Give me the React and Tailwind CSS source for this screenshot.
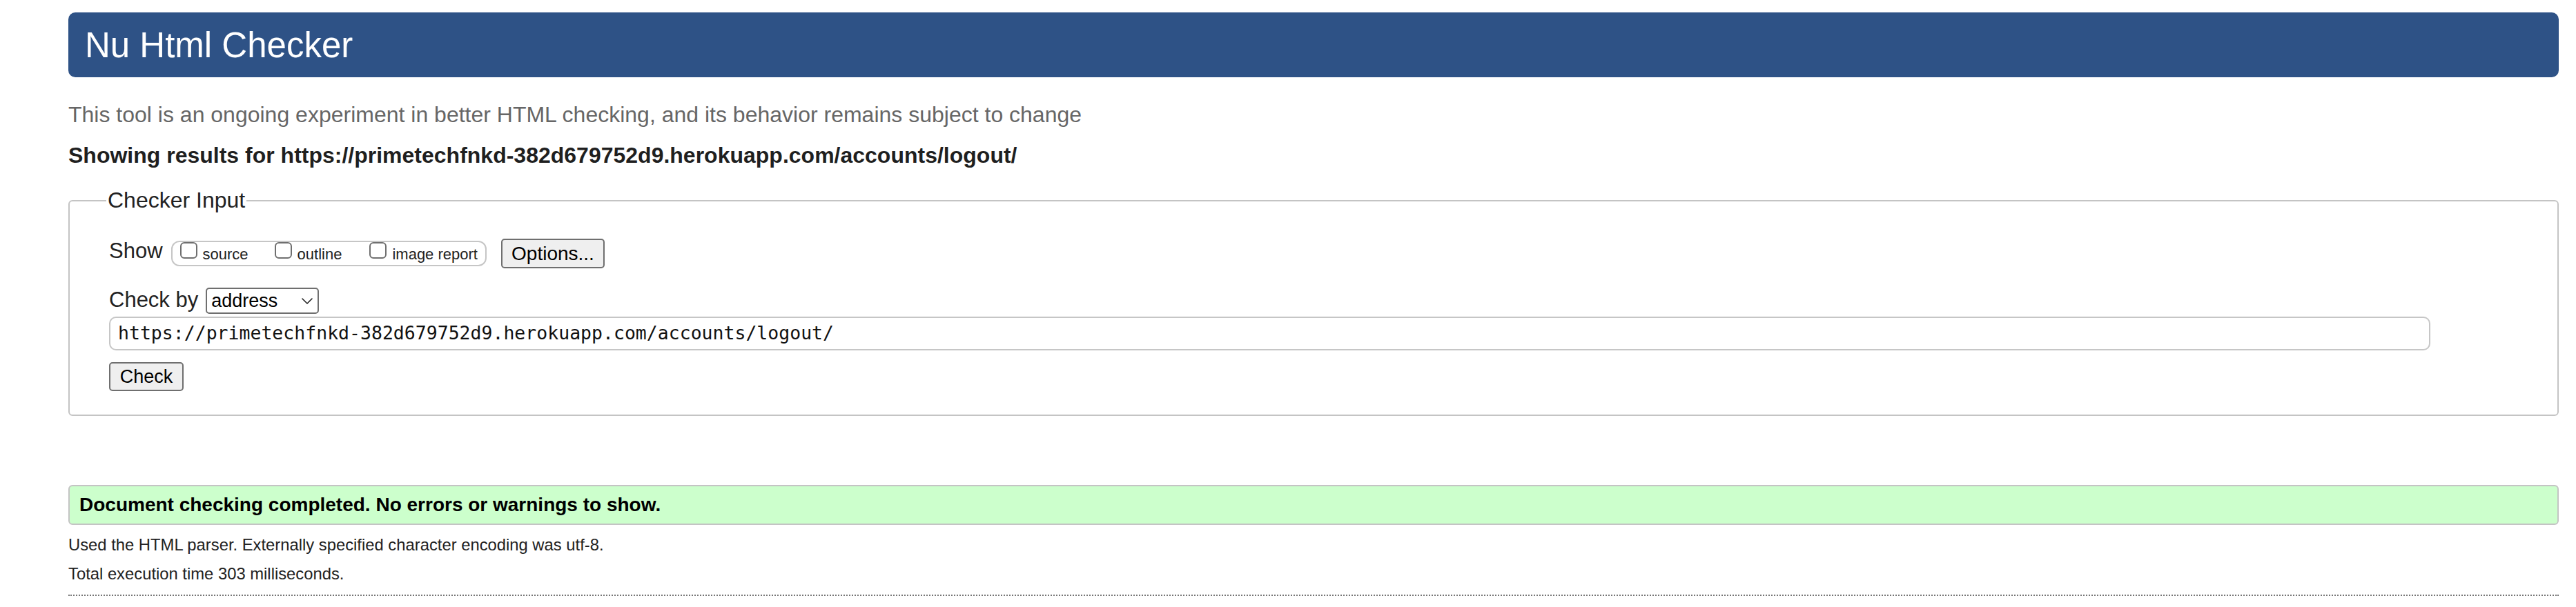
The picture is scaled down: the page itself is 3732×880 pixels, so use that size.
import React from 'react';

const sans = { fontFamily: '"Liberation Sans", Arial, sans-serif' };

const url = 'https://primetechfnkd-382d679752d9.herokuapp.com/accounts/logout/';

const CheckOption = ({ label, className = '' }) => (
  <label className={`flex items-start ${className}`}>
    <input
      type="checkbox"
      className="appearance-none w-[25px] h-[24px] border-2 border-[#6f6f6f] rounded-[6px] bg-white shrink-0"
    />
    <span className="ml-[8px] mt-[5px] text-[22px] leading-[25px] text-[#222]">{label}</span>
  </label>
);

const Button = ({ children, className = '' }) => (
  <button
    className={`flex items-center justify-center bg-[#efefef] border-2 border-[#6f6f6f] rounded-[5px] leading-none text-black ${className}`}
  >
    {children}
  </button>
);

export default function App() {
  return (
    <div className="bg-white min-h-[880px] pt-[18px]" style={sans}>
      <div className="ml-[99px] w-[3608px]">
        {/* Title bar */}
        <div className="h-[94px] bg-[#2e5286] rounded-[10px] flex items-center pl-[24px]">
          <h1 className="text-[51px] leading-none font-normal text-white">Nu Html Checker</h1>
        </div>

        <p className="mt-[36px] text-[32px] leading-[37px] text-[#666]">
          This tool is an ongoing experiment in better HTML checking, and its behavior remains subject to change
        </p>

        <p className="mt-[22px] text-[32px] leading-[37px] font-bold text-[#1f1f1f]">
          Showing results for {url}
        </p>

        {/* Checker input */}
        <fieldset className="mt-[28px] border-2 border-solid border-[#c4c4c4] rounded-[6px] pl-[57px] pt-[37px] pb-[34px]">
          <legend className="-ml-[4px] px-[2px] text-[32px] leading-[37px] text-[#222]">Checker Input</legend>

          <div className="flex items-start">
            <span className="text-[31px] leading-[36px] text-[#222]">Show</span>
            <fieldset className="ml-[12px] mt-[3px] h-[37px] flex items-start border-2 border-solid border-[#c6c6c6] rounded-[12px] pl-[11px] pr-[11px]">
              <CheckOption label="source" />
              <CheckOption label="outline" className="ml-[38px]" />
              <CheckOption label="image report" className="ml-[40px]" />
            </fieldset>
            <Button className="ml-[21px] w-[150px] h-[43px] text-[28px]">Options...</Button>
          </div>

          <div className="flex items-start mt-[28px]">
            <span className="text-[31px] leading-[36px] text-[#222]">Check by</span>
            <div className="ml-[11px] w-[164px] h-[38px] border-2 border-[#6f6f6f] rounded-[5px] flex items-center justify-between pl-[6px] pr-[6px]">
              <span className="text-[27px] leading-none text-black">address</span>
              <svg width="18" height="12" viewBox="0 0 18 12" fill="none" stroke="#222" strokeWidth="1.6" strokeLinecap="round" strokeLinejoin="round">
                <path d="M2 3l7 7 7-7" />
              </svg>
            </div>
          </div>

          <div className="mt-[4px] w-[3363px] h-[49px] border-2 border-[#c6c6c6] rounded-[10px] flex items-center pl-[11px]">
            <span className="text-[26.5px] leading-none text-[#111]" style={{ fontFamily: '"DejaVu Sans Mono", monospace' }}>
              {url}
            </span>
          </div>

          <Button className="mt-[17px] w-[108px] h-[42px] text-[27px]">Check</Button>
        </fieldset>

        {/* Result */}
        <div className="mt-[100px] h-[58px] bg-[#ccffcc] border-2 border-[#c4c4c4] rounded-[6px] flex items-center pl-[14px]">
          <p className="text-[28px] leading-none font-bold text-black">
            Document checking completed. No errors or warnings to show.
          </p>
        </div>

        <p className="mt-[15px] text-[23.8px] leading-[27px] text-[#222]">
          Used the HTML parser. Externally specified character encoding was utf-8.
        </p>
        <p className="mt-[15px] text-[23.8px] leading-[27px] text-[#222]">
          Total execution time 303 milliseconds.
        </p>

        <div className="mt-[17px] border-t-2 border-dotted border-[#777]" />
      </div>
    </div>
  );
}
